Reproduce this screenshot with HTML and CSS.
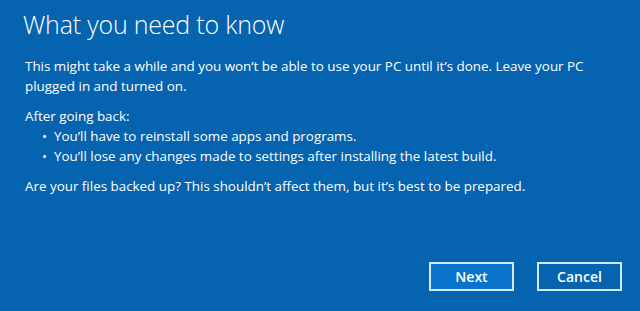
FILE: index.html
```html
<!DOCTYPE html>
<html lang="en">
<head>
<meta charset="utf-8">
<link rel="stylesheet" href="styles.css">
</head>
<body>
<div class="dialog">
  <div class="content">
    <h1 class="title">What you need to know</h1>
    <p class="para">This might take a while and you won’t be able to use your PC until it’s done. Leave your PC plugged in and turned on.</p>
    <div class="para">
      <div>After going back:</div>
      <ul class="list">
        <li>You’ll have to reinstall some apps and programs.</li>
        <li>You’ll lose any changes made to settings after installing the latest build.</li>
      </ul>
    </div>
    <p class="para">Are your files backed up? This shouldn’t affect them, but it’s best to be prepared.</p>
  </div>
  <div class="actions">
    <button class="btn btn-primary">Next</button>
    <button class="btn">Cancel</button>
  </div>
</div>
</body>
</html>
```
FILE: styles.css
```css
html, body {
  margin: 0;
  padding: 0;
  height: 100%;
}
body {
  background: #0563b0;
  color: #ffffff;
  font-family: "Open Sans", "Noto Sans", sans-serif;
}
.dialog {
  height: 311px;
  box-sizing: border-box;
  display: flex;
  flex-direction: column;
  justify-content: space-between;
  padding: 6px 18px 20px 25px;
}
.title {
  margin: 0 0 14px -2px;
  font-weight: 300;
  font-size: 25px;
  line-height: 36px;
  letter-spacing: -0.2px;
}
.para {
  margin: 0 0 10px 0;
  font-size: 13.4px;
  line-height: 20px;
}
.list {
  margin: 0;
  padding: 0 0 0 17px;
  list-style: none;
}
.list li {
  position: relative;
  padding-left: 12px;
}
.list li::before {
  content: "•";
  position: absolute;
  left: 0;
}
.actions {
  display: flex;
  justify-content: flex-end;
  gap: 23px;
}
.btn {
  width: 85px;
  height: 29px;
  box-sizing: border-box;
  border: 2px solid #d0ebf5;
  background: #0563b0;
  color: #ffffff;
  font-family: "Open Sans", "Noto Sans", sans-serif;
  font-weight: 600;
  font-size: 14px;
  padding: 0;
}
.btn-primary {
  background: #0a74cc;
}
```
